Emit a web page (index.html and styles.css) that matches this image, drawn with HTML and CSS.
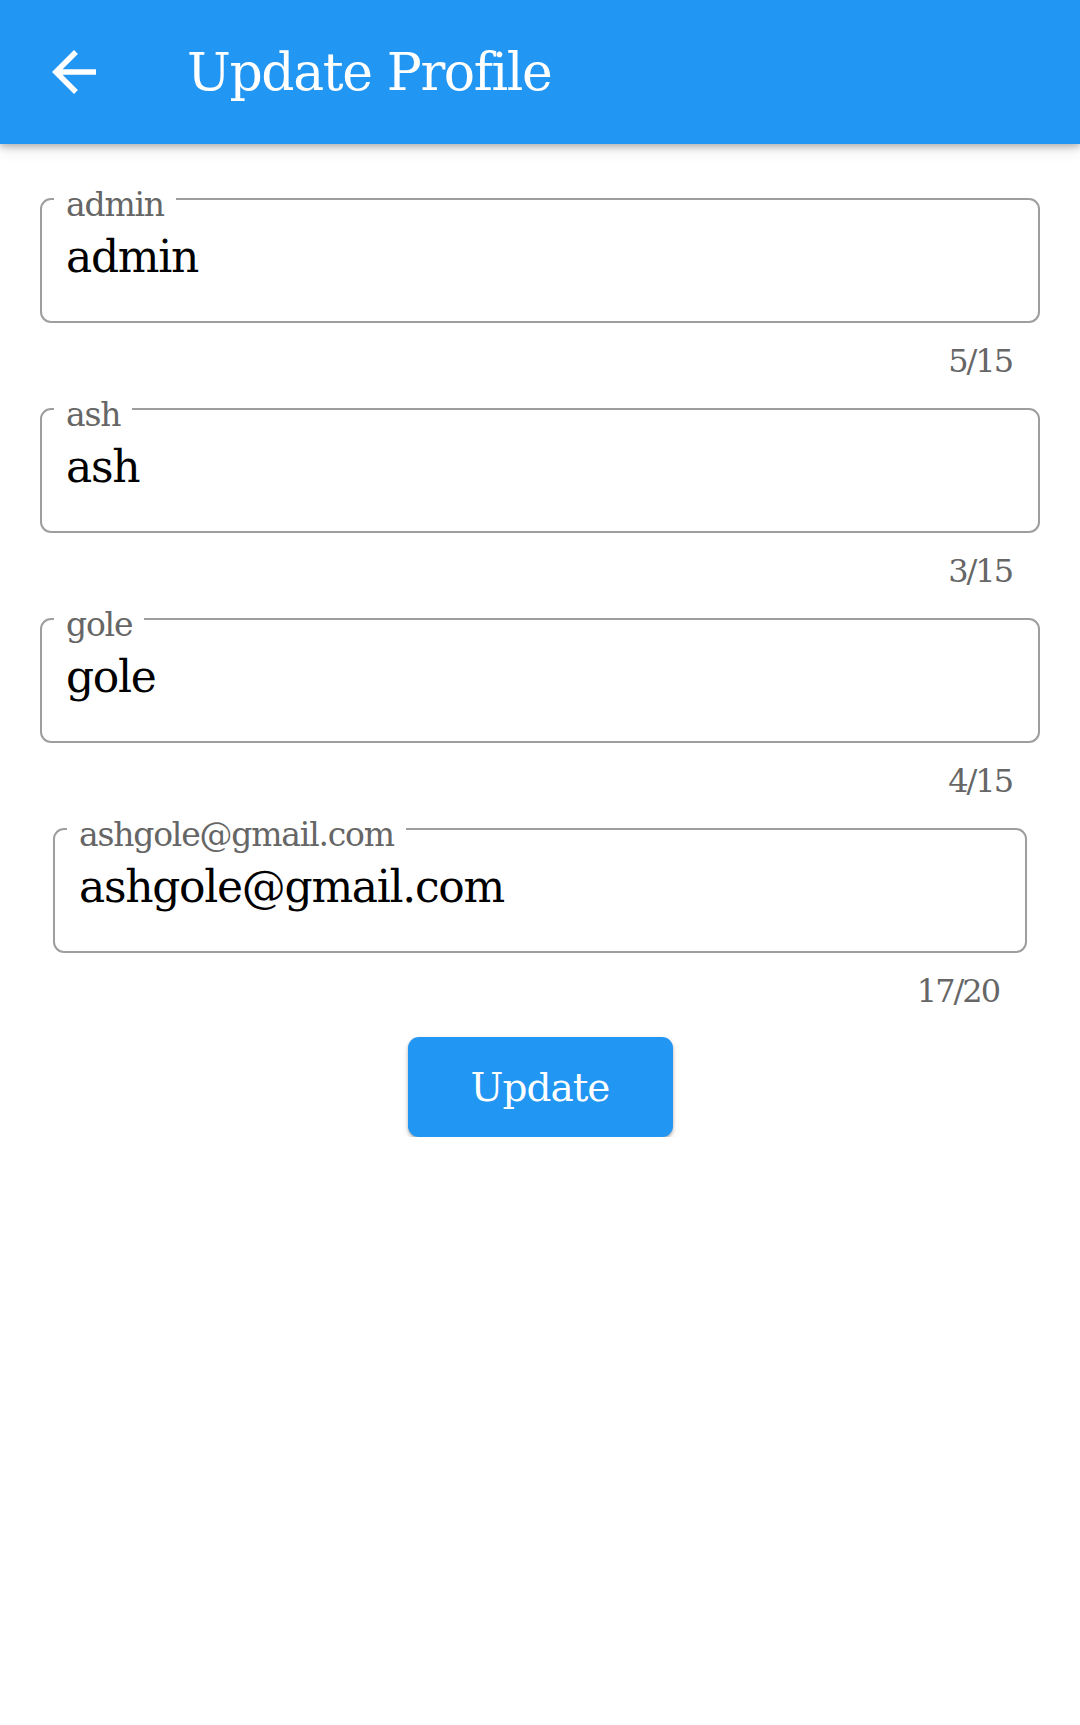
FILE: index.html
```html
<!DOCTYPE html>
<html lang="en">
<head>
<meta charset="utf-8">
<title>Update Profile</title>
<link rel="stylesheet" href="styles.css">
</head>
<body>
<header class="appbar">
  <button class="appbar__back" aria-label="Back">
    <svg viewBox="0 0 24 24" width="66" height="66"><path d="M20 11H7.83l5.59-5.59L12 4l-8 8 8 8 1.41-1.41L7.83 13H20v-2z" fill="#fff"/></svg>
  </button>
  <h1 class="appbar__title">Update Profile</h1>
</header>
<main class="form">
  <div class="field">
    <fieldset class="field__box">
      <legend class="field__label">admin</legend>
      <input class="field__input" type="text" value="admin">
    </fieldset>
    <div class="field__counter">5/15</div>
  </div>
  <div class="field">
    <fieldset class="field__box">
      <legend class="field__label">ash</legend>
      <input class="field__input" type="text" value="ash">
    </fieldset>
    <div class="field__counter">3/15</div>
  </div>
  <div class="field">
    <fieldset class="field__box">
      <legend class="field__label">gole</legend>
      <input class="field__input" type="text" value="gole">
    </fieldset>
    <div class="field__counter">4/15</div>
  </div>
  <div class="field field--inset">
    <fieldset class="field__box">
      <legend class="field__label">ashgole@gmail.com</legend>
      <input class="field__input" type="text" value="ashgole@gmail.com">
    </fieldset>
    <div class="field__counter">17/20</div>
  </div>
  <button class="btn" type="button">Update</button>
</main>
</body>
</html>
```

FILE: styles.css
```css
* { box-sizing: border-box; }
html, body {
  margin: 0;
  padding: 0;
  background: #fff;
  font-family: "DejaVu Serif", "Liberation Serif", serif;
}

.appbar {
  height: 144px;
  background: #2196f3;
  display: flex;
  align-items: center;
  box-shadow: 0 3px 6px rgba(0,0,0,0.22), 0 6px 14px rgba(0,0,0,0.10);
  position: relative;
  z-index: 1;
}
.appbar__back {
  width: 66px;
  height: 66px;
  margin-left: 41px;
  padding: 0;
  border: 0;
  background: none;
  display: flex;
}
.appbar__title {
  margin: 0 0 0 80px;
  font-size: 52px;
  line-height: 55px;
  letter-spacing: -1.4px;
  font-weight: normal;
  color: #fff;
}

.form {
  padding: 33px 40px 0;
  display: flex;
  flex-direction: column;
  gap: 9px;
}

.field {
  display: flex;
  flex-direction: column;
}
.field--inset {
  margin: 0 13px;
}
.field__box {
  margin: 0;
  border: 2.5px solid #9e9e9e;
  border-radius: 11px;
  padding: 6px 24px 34px;
  min-width: 0;
}
.field__label {
  padding: 11px 12px 0;
  margin-left: -12px;
  font-size: 33px;
  line-height: 33px;
  letter-spacing: -1.2px;
  color: #666;
}
.field__input {
  display: block;
  width: 100%;
  border: 0;
  padding: 0;
  margin: 0;
  outline: none;
  background: transparent;
  font-family: inherit;
  font-size: 44px;
  line-height: 60px;
  height: 60px;
  letter-spacing: -1.3px;
  color: #000;
}
.field__counter {
  margin-top: 22px;
  padding-right: 28px;
  text-align: right;
  font-size: 32px;
  line-height: 33px;
  letter-spacing: -2px;
  color: #666;
}

.btn {
  align-self: center;
  margin-top: 20px;
  width: 265px;
  height: 100px;
  border: 0;
  border-radius: 11px;
  background: #2196f3;
  color: #fff;
  font-family: inherit;
  font-size: 39px;
  letter-spacing: -1px;
  box-shadow: 0 2px 3px rgba(0,0,0,0.25), 0 3px 6px rgba(0,0,0,0.12);
}
```
